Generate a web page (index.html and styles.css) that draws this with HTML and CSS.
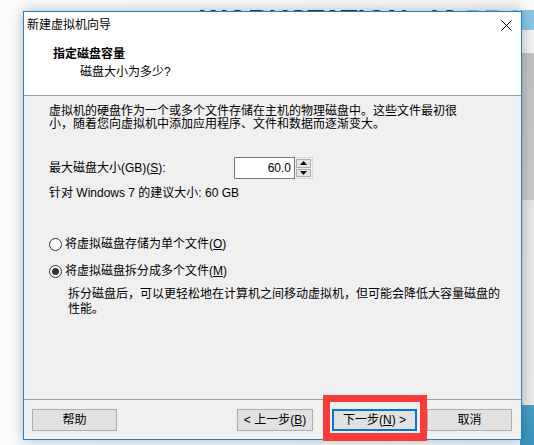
FILE: index.html
```html
<!DOCTYPE html>
<html lang="zh-CN">
<head>
<meta charset="utf-8">
<title>新建虚拟机向导</title>
<link rel="stylesheet" href="styles.css">
</head>
<body>
<div class="desktop">
  <div class="brand">WORKSTATION<span class="tm">™</span> 12 <span class="pro">PRO</span></div>
  <div class="side-strip"></div>
  <div class="dialog">
    <div class="top">
      <div class="titlebar">
        <span class="title">新建虚拟机向导</span>
        <span class="close"><svg width="11" height="11" viewBox="0 0 11 11"><path d="M0.5 0.5L10.5 10.5M10.5 0.5L0.5 10.5" stroke="#000" stroke-width="1"/></svg></span>
      </div>
      <div class="header">
        <div class="h-title">指定磁盘容量</div>
        <div class="h-sub">磁盘大小为多少?</div>
      </div>
    </div>
    <div class="body">
      <p class="intro">虚拟机的硬盘作为一个或多个文件存储在主机的物理磁盘中。这些文件最初很<br>小，随着您向虚拟机中添加应用程序、文件和数据而逐渐变大。</p>
      <div class="size-row">
        <span class="size-label">最大磁盘大小(GB)(<u>S</u>):</span>
        <div class="spin">
          <div class="spin-input">60.0</div>
          <div class="spin-btns">
            <div class="spin-btn"><svg width="7" height="4" viewBox="0 0 7 4"><path d="M3.5 0L7 4H0Z" fill="#000"/></svg></div>
            <div class="spin-btn"><svg width="7" height="4" viewBox="0 0 7 4"><path d="M0 0H7L3.5 4Z" fill="#000"/></svg></div>
          </div>
        </div>
      </div>
      <div class="recommend">针对 Windows 7 的建议大小: 60 GB</div>
      <div class="radio first"><span class="dot"></span>将虚拟磁盘存储为单个文件(<u>O</u>)</div>
      <div class="radio second"><span class="dot checked"></span>将虚拟磁盘拆分成多个文件(<u>M</u>)</div>
      <p class="desc">拆分磁盘后，可以更轻松地在计算机之间移动虚拟机，但可能会降低大容量磁盘的<br>性能。</p>
    </div>
    <div class="footer">
      <button class="btn help">帮助</button>
      <div class="spacer"></div>
      <button class="btn back">&lt; 上一步(<u>B</u>)</button>
      <button class="btn next">下一步(<u>N</u>) &gt;</button>
      <button class="btn cancel">取消</button>
    </div>
  </div>
  <div class="highlight"></div>
</div>
</body>
</html>
```
FILE: styles.css
```css
* { box-sizing: border-box; }
html, body { margin: 0; padding: 0; }
body {
  font-family: "Liberation Sans", "Noto Sans CJK SC", sans-serif;
  font-size: 12px;
  color: #000;
  background: #f7f7f7;
}
u { text-decoration: underline; text-underline-offset: 1px; }

.desktop {
  position: relative;
  width: 534px;
  height: 445px;
  overflow: hidden;
  background: linear-gradient(to right, #fbfbfb, #f4f4f4);
}

.brand {
  position: absolute;
  left: 200px;
  top: 6px;
  font-family: "Liberation Sans", sans-serif;
  font-weight: bold;
  font-size: 28px;
  line-height: 28px;
  color: #3a3a3a;
  white-space: nowrap;
}
.brand .tm { font-size: 11px; vertical-align: top; color: #777; }
.brand .pro { color: #8fc3de; }

.side-strip {
  position: absolute;
  right: 0;
  top: 0;
  width: 14px;
  height: 445px;
  background: linear-gradient(to bottom,
    #fafafa 0, #fafafa 10px,
    #8ac7e2 10px, #8ac7e2 30px,
    #f2f2f2 30px, #f2f2f2 53px,
    #c2c2c2 53px, #cbcbcb 200px,
    #e6e6e6 200px, #e9e9e9 405px,
    #4aa0c4 405px, #3a94bb 445px);
}

.dialog {
  position: absolute;
  left: 23px;
  top: 11px;
  width: 499px;
  height: 429px;
  border: 1px solid #1883d7;
  background: #f0f0f0;
  display: flex;
  flex-direction: column;
  box-shadow: 0 0 12px rgba(0, 0, 0, 0.28);
}

.top {
  background: #fff;
  border-bottom: 1px solid #a0a0a0;
}
.titlebar {
  height: 26px;
  display: flex;
  align-items: center;
  justify-content: space-between;
  padding-left: 3px;
}
.title { line-height: 16px; }
.close {
  width: 30px;
  height: 26px;
  display: flex;
  align-items: center;
  justify-content: center;
}
.close svg { display: block; }

.header {
  padding: 8px 0 15px 29px;
}
.h-title {
  font-weight: bold;
  line-height: 16px;
}
.h-sub {
  margin-top: 2px;
  padding-left: 27px;
  line-height: 16px;
}

.body {
  flex: 1;
  padding: 9px 0 0 25px;
}
.intro {
  margin: 0;
  line-height: 13px;
  white-space: nowrap;
}
.size-row {
  margin-top: 26px;
  height: 22px;
  display: flex;
  align-items: center;
}
.size-label {
  width: 185px;
  line-height: 16px;
}
.spin {
  display: flex;
  height: 22px;
}
.spin-input {
  width: 61px;
  height: 22px;
  border: 1px solid #7a7a7a;
  background: #fff;
  text-align: right;
  padding-right: 3px;
  line-height: 20px;
}
.spin-btns {
  width: 18px;
  height: 22px;
  display: flex;
  flex-direction: column;
  gap: 1px;
  padding: 1px;
  border: 1px solid #dadada;
  border-left: 0;
}
.spin-btn {
  flex: 1;
  border: 1px solid #adadad;
  background: #e5e5e5;
  display: flex;
  align-items: center;
  justify-content: center;
}
.spin-btn svg { display: block; }

.recommend {
  margin-top: 6px;
  line-height: 16px;
}

.radio {
  display: flex;
  align-items: center;
  line-height: 16px;
}
.radio.first { margin-top: 35px; }
.radio.second { margin-top: 11px; }
.dot {
  width: 13px;
  height: 13px;
  border: 1px solid #333;
  border-radius: 50%;
  background: #fff;
  margin-right: 3px;
  display: flex;
  align-items: center;
  justify-content: center;
}
.dot.checked::after {
  content: "";
  width: 7px;
  height: 7px;
  border-radius: 50%;
  background: #333;
}

.desc {
  margin: 8px 0 0 0;
  padding-left: 19px;
  line-height: 15px;
  white-space: nowrap;
}

.footer {
  border-top: 1px solid #a0a0a0;
  padding: 9px 9px 8px 8px;
  display: flex;
  align-items: center;
}
.spacer { flex: 1; }
.btn {
  font-family: "Liberation Sans", "Noto Sans CJK SC", sans-serif;
  font-size: 12px;
  color: #000;
  height: 22px;
  width: 85px;
  padding: 0;
  background: #e1e1e1;
  border: 1px solid #adadad;
  line-height: 18px;
}
.btn.back { width: 76px; margin-right: 19px; }
.btn.next { border: 2px solid #0078d7; margin-right: 10px; }

.highlight {
  position: absolute;
  left: 323px;
  top: 395px;
  width: 104px;
  height: 46px;
  border: 7px solid #f83c3c;
  border-bottom-width: 8px;
}
```
